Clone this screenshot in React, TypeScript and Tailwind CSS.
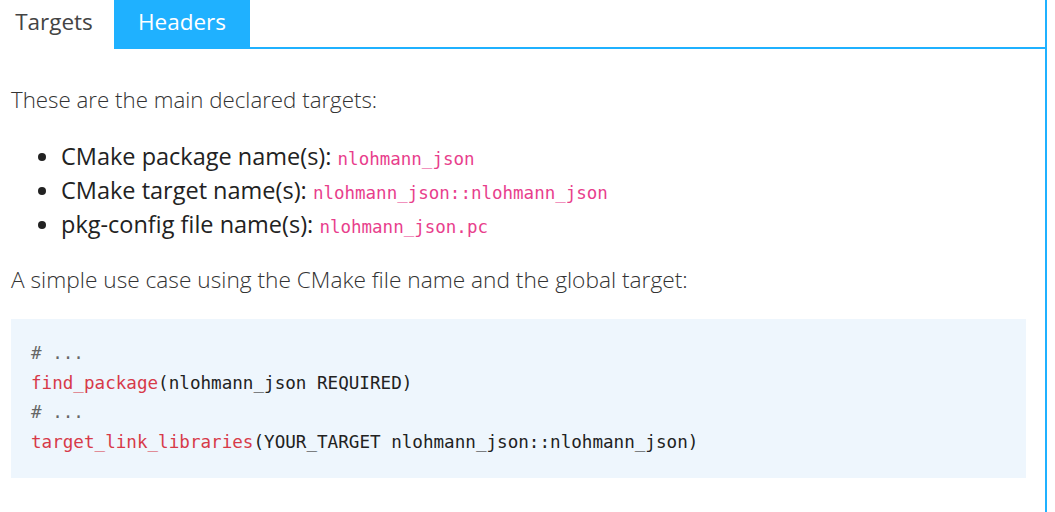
import React from "react";

const sans = "font-['Segoe_UI','Open_Sans',sans-serif]";
const mono = "font-['DejaVu_Sans_Mono',monospace]";

function InlineCode({ children }: { children: React.ReactNode }) {
  return <code className={`${mono} text-[17.5px] leading-none text-[#e83e8c]`}>{children}</code>;
}

export default function App() {
  const items: [string, string][] = [
    ["CMake package name(s):", "nlohmann_json"],
    ["CMake target name(s):", "nlohmann_json::nlohmann_json"],
    ["pkg-config file name(s):", "nlohmann_json.pc"],
  ];

  return (
    <div className={`${sans} w-[1055px] h-[512px] bg-white overflow-hidden`}>
      {/* Tabs */}
      <div className="flex h-[49px]">
        <div className="w-[114px] flex items-center justify-center text-[22.5px] text-[#444] pb-[5px] pr-[6px]">
          Targets
        </div>
        <div className="w-[136px] flex items-center justify-center bg-[#1fb1ff] text-white text-[22.5px] pb-[5px]">
          Headers
        </div>
        <div className="w-[797px] border-b-[2px] border-r-[2px] border-[#1fb1ff]" />
      </div>

      {/* Panel */}
      <div className="w-[1047px] border-r-[2px] border-[#1fb1ff] pl-[11px] pr-[19px] pt-[36px] pb-[40px]">
        <p className="text-[22.3px] font-light text-[#333] leading-[30px]">
          These are the main declared targets:
        </p>
        <ul className="list-disc pl-[50px] mt-[24px] text-[23.5px] text-[#222] leading-[34px]">
          {items.map(([label, code]) => (
            <li key={code}>
              {label} <InlineCode>{code}</InlineCode>
            </li>
          ))}
        </ul>
        <p className="mt-[24px] text-[22.7px] font-light text-[#333] leading-[30px]">
          A simple use case using the CMake file name and the global target:
        </p>
        <pre className={`${mono} mt-[24px] bg-[#eef6fd] px-[20px] pt-[20px] pb-[21px] text-[17.6px] leading-[29.5px] text-[#222]`}>
          <span className="text-[#666]"># ...</span>
          {"\n"}
          <span className="text-[#d73a49]">find_package</span>(nlohmann_json REQUIRED)
          {"\n"}
          <span className="text-[#666]"># ...</span>
          {"\n"}
          <span className="text-[#d73a49]">target_link_libraries</span>(YOUR_TARGET nlohmann_json::nlohmann_json)
        </pre>
      </div>
    </div>
  );
}
